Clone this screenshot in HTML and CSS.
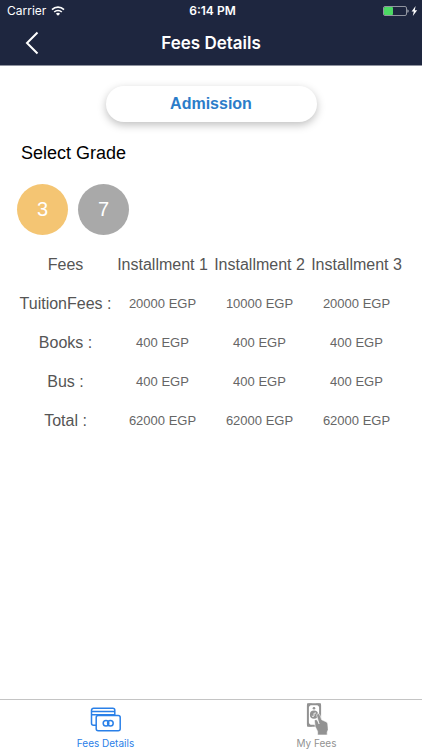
FILE: index.html
```html
<!DOCTYPE html>
<html lang="en">
<head>
    <meta charset="UTF-8">
    <meta name="viewport" content="width=device-width, initial-scale=1.0">
    <title>Fees Details</title>
    <link rel="stylesheet" href="styles.css">
</head>
<body>
    <header class="header">
        <div class="status-bar">
            <div class="status-left">
                <span>Carrier</span>
                <svg width="14" height="10" viewBox="0 0 14 10" fill="none" stroke="#fff" stroke-width="1.6">
                    <path d="M1 3.6a8.6 8.6 0 0 1 12 0M3.2 6a5.4 5.4 0 0 1 7.6 0"/>
                    <path d="M7 9.8L4.9 7.7a3 3 0 0 1 4.2 0z" fill="#fff" stroke="none"/>
                </svg>
            </div>
            <span class="status-time">6:14 PM</span>
            <div class="status-right">
                <svg width="35" height="12" viewBox="0 0 35 12">
                    <rect x="0.5" y="1.5" width="23" height="9" rx="1.5" fill="none" stroke="#9195a0"/>
                    <rect x="1" y="2" width="9" height="8" rx="1" fill="#4cd964"/>
                    <path d="M24.5 4.2c1.4 0.4 1.4 3.2 0 3.6z" fill="#d4d6dc"/>
                    <path d="M32.6 1l-4 5.6h2.2L29.8 11l4.4-5.8h-2.4z" fill="#fff"/>
                </svg>
            </div>
        </div>
        <div class="nav-bar">
            <button class="back" type="button" aria-label="Back">
                <svg width="14" height="24" viewBox="0 0 14 24" fill="none" stroke="#fff" stroke-width="2">
                    <path d="M12.5 1.5L2 12l10.5 10.5"/>
                </svg>
            </button>
            <h1>Fees Details</h1>
        </div>
    </header>

    <main class="content">
        <button class="admission" type="button">Admission</button>
        <h2>Select Grade</h2>
        <div class="grades">
            <button class="grade selected" type="button">3</button>
            <button class="grade" type="button">7</button>
        </div>
        <table class="fees">
            <thead>
                <tr>
                    <th scope="col">Fees</th>
                    <th scope="col">Installment 1</th>
                    <th scope="col">Installment 2</th>
                    <th scope="col">Installment 3</th>
                </tr>
            </thead>
            <tbody>
                <tr>
                    <th scope="row">TuitionFees :</th>
                    <td>20000 EGP</td>
                    <td>10000 EGP</td>
                    <td>20000 EGP</td>
                </tr>
                <tr>
                    <th scope="row">Books :</th>
                    <td>400 EGP</td>
                    <td>400 EGP</td>
                    <td>400 EGP</td>
                </tr>
                <tr>
                    <th scope="row">Bus :</th>
                    <td>400 EGP</td>
                    <td>400 EGP</td>
                    <td>400 EGP</td>
                </tr>
                <tr>
                    <th scope="row">Total :</th>
                    <td>62000 EGP</td>
                    <td>62000 EGP</td>
                    <td>62000 EGP</td>
                </tr>
            </tbody>
        </table>
    </main>

    <nav class="tab-bar">
        <a class="tab active" href="#fees-details">
            <svg width="32" height="34" viewBox="0 -4 32 34" fill="none" stroke="currentColor" stroke-width="1.5">
                <path d="M6 19.3H3.5a2 2 0 0 1-2-2v-13a2 2 0 0 1 2-2h19.3a2 2 0 0 1 2 2V9M1.5 5.5h23.3M1.5 8.8h23.3"/>
                <rect x="6.2" y="9.6" width="24" height="15.2" rx="2" fill="#fff"/>
                <circle cx="16" cy="17.2" r="2.8"/>
                <circle cx="20.4" cy="17.2" r="2.8"/>
            </svg>
            <span>Fees Details</span>
        </a>
        <a class="tab" href="#my-fees">
            <svg width="22" height="34" viewBox="1 0 22 34">
                <rect x="2.9" y="2.2" width="12.2" height="21.6" rx="1" fill="#fff" stroke="currentColor" stroke-width="2"/>
                <path d="M2 1.5h5L2 7zM16 1.5h-5L16 7zM2 24.5h5L2 19z" fill="currentColor"/>
                <circle cx="9" cy="6.3" r="1.3" fill="currentColor"/>
                <circle cx="9" cy="12.7" r="4.1" fill="currentColor"/>
                <path d="M6.9 13.8c1.2 1.6 2.4 0.4 2.1-1.1s1.1-2.6 2.1-1.1" fill="none" stroke="#fff" stroke-width="1"/>
                <path d="M9.4 18.4c1.2-1.3 2.6-0.8 3.2 0.4l1.5 3.2-2.4-8.6c-0.3-2 2.4-2.4 3-0.8l2 5.2 4.4 2c1.2 0.7 1.6 1.6 1.7 3l0.4 5-1 2.2V33H12.6v-3.6l-2.4-4.8z" fill="currentColor" stroke="#fff" stroke-width="0.6"/>
            </svg>
            <span>My Fees</span>
        </a>
    </nav>
</body>
</html>
```

FILE: styles.css
```css
* {
    box-sizing: border-box;
}
body {
    font-family: "Liberation Sans", Arial, sans-serif;
    margin: 0;
    min-height: 100vh;
    display: flex;
    flex-direction: column;
    background-color: #fff;
}
button {
    border: none;
    padding: 0;
    font-family: inherit;
    cursor: pointer;
}
svg {
    display: block;
}
.header {
    background: #1e263f;
    color: #fff;
    font-family: Inter, sans-serif;
    border-bottom: 1px solid #8f939f;
}
.status-bar {
    display: grid;
    grid-template-columns: 1fr auto 1fr;
    align-items: center;
    height: 21px;
    padding: 0 4px 0 7px;
    font-size: 12px;
}
.status-left {
    display: flex;
    align-items: center;
    gap: 5px;
}
.status-time {
    font-weight: 600;
}
.status-right {
    display: flex;
    justify-content: flex-end;
}
.nav-bar {
    display: grid;
    grid-template-columns: 44px 1fr 44px;
    align-items: center;
    height: 44px;
}
.back {
    display: flex;
    justify-content: flex-end;
    padding-right: 5px;
    background: none;
}
h1 {
    margin: 0;
    font-size: 17px;
    font-weight: 600;
    text-align: center;
}
.content {
    flex: 1;
    display: flex;
    flex-direction: column;
    padding: 20px 17px;
}
.admission {
    align-self: center;
    width: 50%;
    min-width: 211px;
    height: 36px;
    border-radius: 18px;
    background: #fff;
    color: #2b7cc9;
    font-size: 16px;
    font-weight: bold;
    box-shadow: 0 3px 8px rgba(0,0,0,0.25);
}
h2 {
    margin: 20px 4px;
    font-size: 18px;
    line-height: 22px;
    font-weight: normal;
    color: #000;
}
.grades {
    display: flex;
    gap: 10px;
}
.grade {
    width: 51px;
    height: 51px;
    border-radius: 50%;
    background: #a9a9a9;
    color: #fff;
    font-size: 20px;
}
.grade.selected {
    background: #f4c573;
}
.fees {
    width: 100%;
    margin-top: 10px;
    table-layout: fixed;
    border-collapse: collapse;
    color: #666;
    text-align: center;
}
.fees th,
.fees td {
    height: 39px;
    padding: 0;
    white-space: nowrap;
}
.fees th {
    font-size: 16px;
    font-weight: normal;
    color: #555;
}
.fees td {
    font-size: 13px;
}
.tab-bar {
    display: flex;
    border-top: 1px solid #c4c4c4;
    background: #fff;
}
.tab {
    flex: 1;
    display: flex;
    flex-direction: column;
    align-items: center;
    padding-top: 2px;
    color: #929292;
    font-family: Inter, sans-serif;
    font-size: 10px;
    line-height: 14px;
    text-decoration: none;
}
.tab.active {
    color: #2a80e8;
}
```
